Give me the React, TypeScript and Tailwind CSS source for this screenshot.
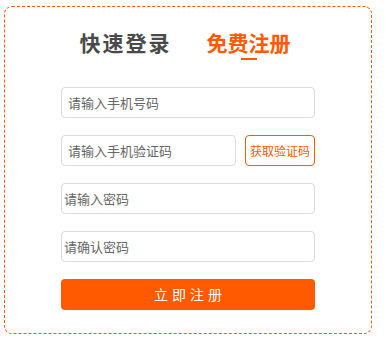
import React from "react";

export default function App() {
  return (
    <div className="w-[386px] h-[342px] bg-white pl-[4px] pt-[6px] font-['Microsoft_YaHei','Noto_Sans_CJK_SC',sans-serif]">
      <div className="w-[368px] h-[328px] rounded-[8px] border border-dashed border-[#ff5a00] flex flex-col items-center">
        <div className="flex items-start gap-[35px] mt-[21px] mr-[6px] h-[59px]">
          <div className="text-[21px] leading-[28px] font-bold tracking-[2px] text-[#4a4a4a]">快速登录</div>
          <div className="flex flex-col items-center">
            <div className="text-[21px] leading-[28px] font-bold text-[#ff5a00]">免费注册</div>
            <div className="w-[16px] h-[2px] bg-[#ff5a00] mt-[2px]" />
          </div>
        </div>
        <div className="w-[254px] flex flex-col gap-[17px]">
          <input
            className="h-[31px] w-full rounded-[4px] border border-[#dcdcdc] px-[6px] text-[13px] outline-none placeholder:text-[#666]"
            placeholder="请输入手机号码"
          />
          <div className="flex gap-[9px]">
            <input
              className="h-[31px] w-[175px] rounded-[4px] border border-[#dcdcdc] px-[6px] text-[13px] outline-none placeholder:text-[#666]"
              placeholder="请输入手机验证码"
            />
            <button className="h-[31px] w-[70px] rounded-[4px] border border-[#ff5a00] text-[12px] text-[#ff5a00] bg-white">
              获取验证码
            </button>
          </div>
          <input
            type="password"
            className="h-[31px] w-full rounded-[4px] border border-[#dcdcdc] px-[2px] text-[13px] outline-none placeholder:text-[#666]"
            placeholder="请输入密码"
          />
          <input
            type="password"
            className="h-[31px] w-full rounded-[4px] border border-[#dcdcdc] px-[2px] text-[13px] outline-none placeholder:text-[#666]"
            placeholder="请确认密码"
          />
          <button className="h-[31px] w-full rounded-[4px] bg-[#ff5a00] text-white text-[14px] tracking-[4px] pl-[4px]">
            立即注册
          </button>
        </div>
      </div>
    </div>
  );
}
